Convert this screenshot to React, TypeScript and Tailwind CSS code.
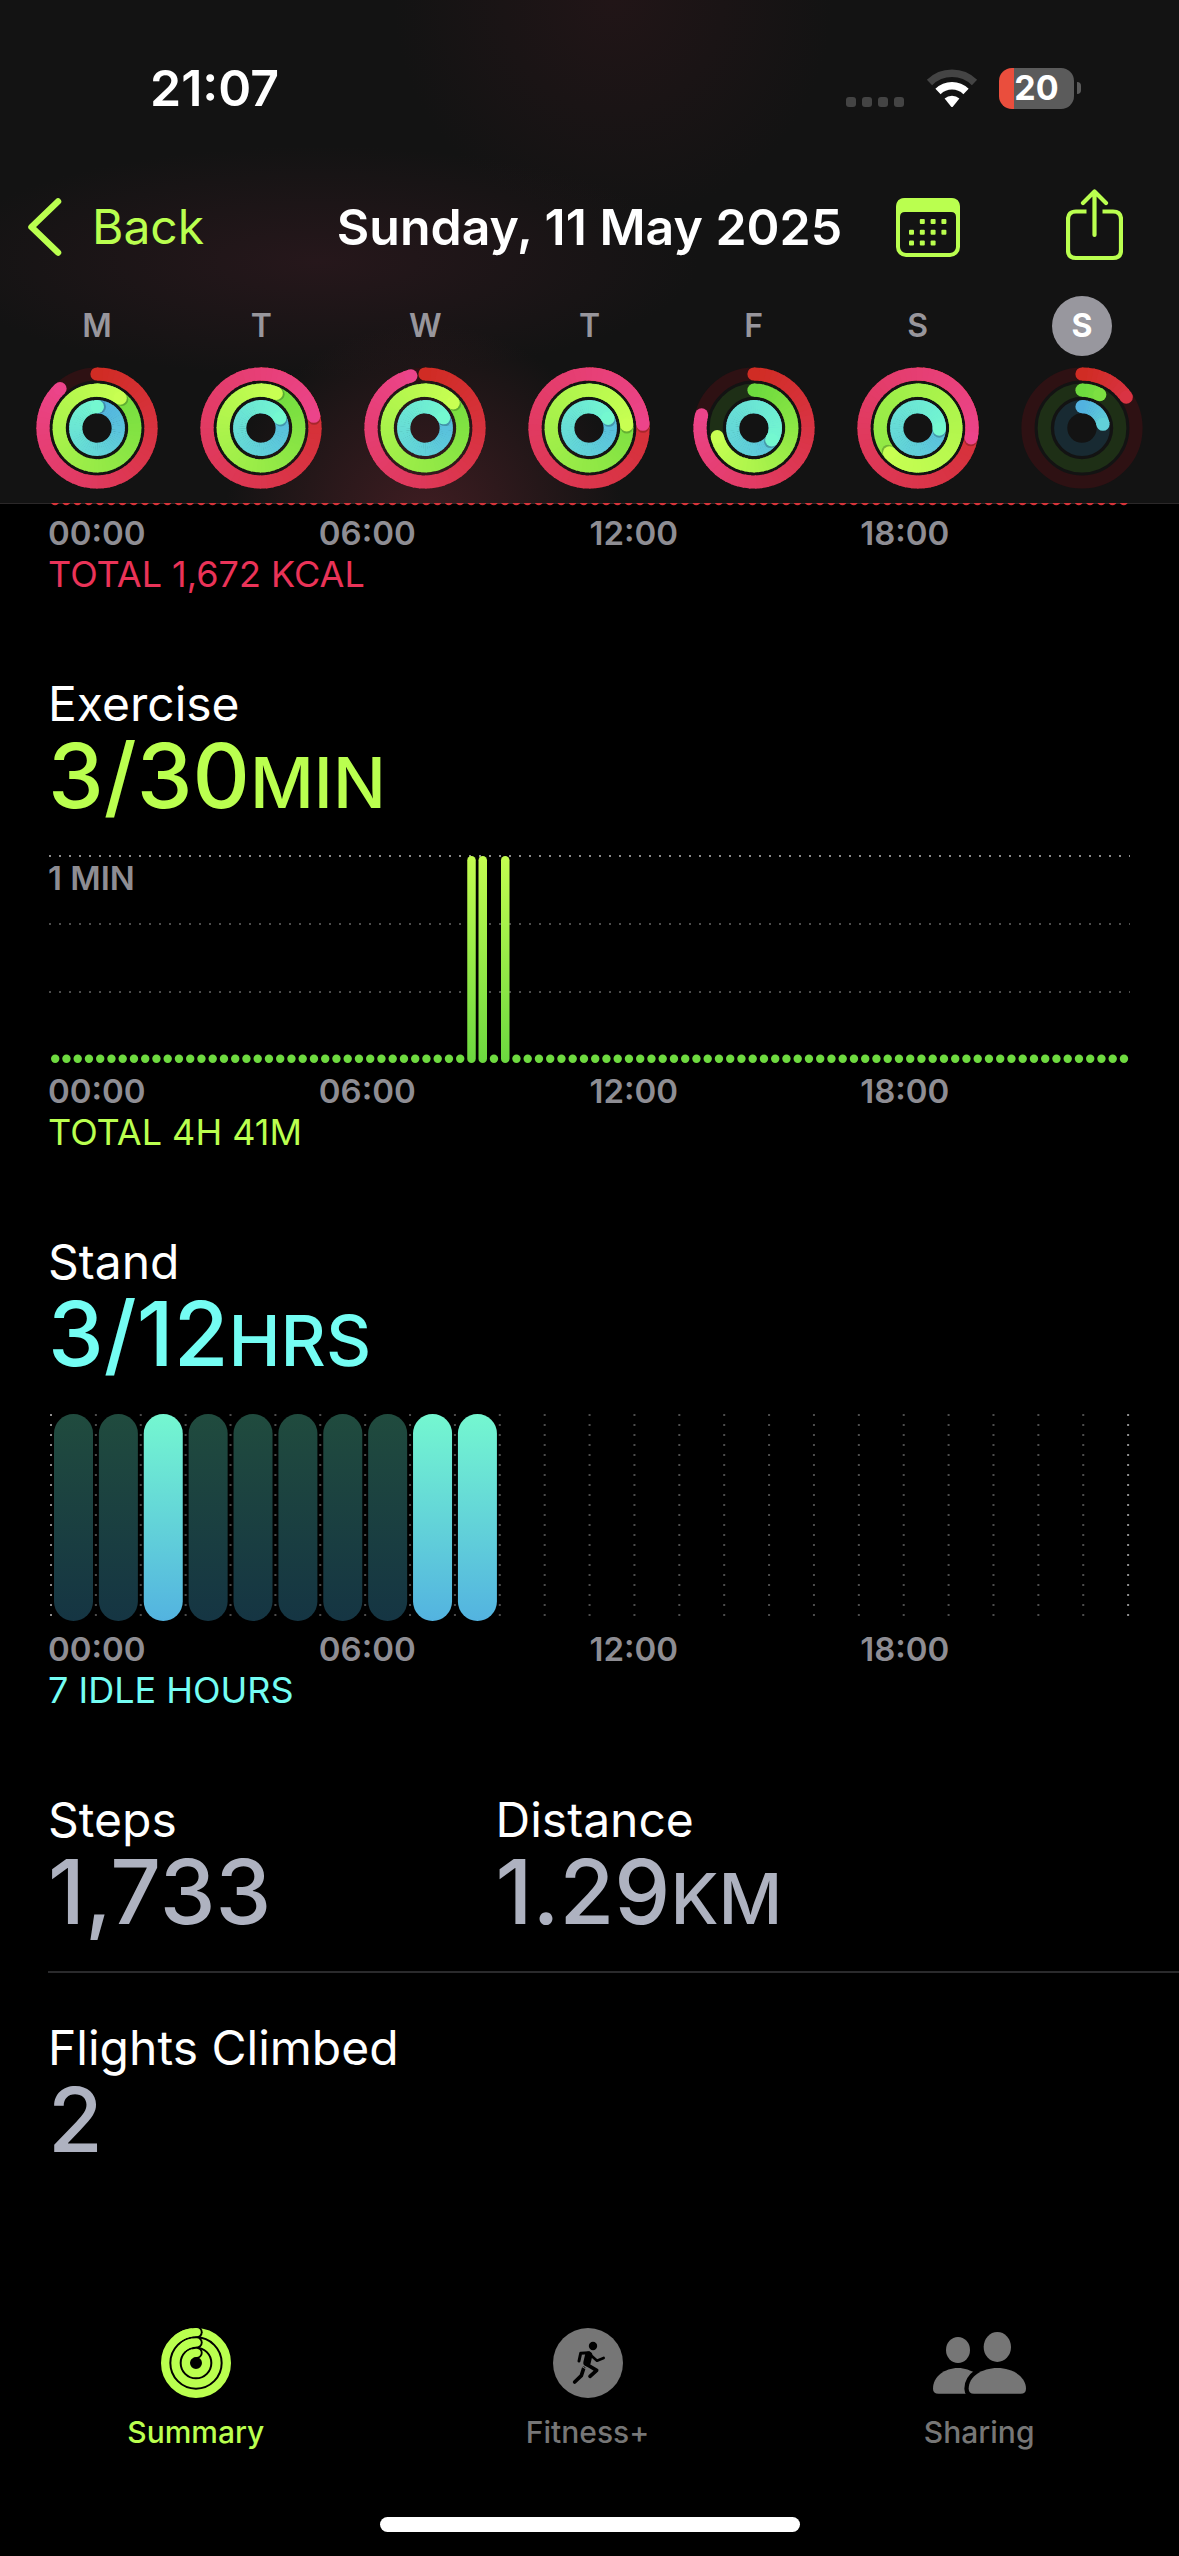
import type { ReactNode } from 'react'

type RGB = [number, number, number]

const RING_STYLES: { radius: number; from: RGB; to: RGB; track: string }[] = [
  { radius: 54, from: [208, 44, 36], to: [236, 68, 138], track: '#2e1113' },
  { radius: 37.8, from: [110, 218, 62], to: [200, 255, 82], track: '#1e2f16' },
  { radius: 21.3, from: [82, 178, 224], to: [116, 248, 208], track: '#182a32' },
]

// move, exercise and stand progress, 1 = goal reached
const WEEK = [
  { day: 'Monday', values: [0.88, 1.105, 1.003] },
  { day: 'Tuesday', values: [1.215, 1.066, 1.173] },
  { day: 'Wednesday', values: [0.958, 1.134, 1.17] },
  { day: 'Thursday', values: [1.239, 1.237, 1.176] },
  { day: 'Friday', values: [0.789, 0.713, 1.344] },
  { day: 'Saturday', values: [1.279, 1.636, 1.258] },
  { day: 'Sunday', values: [0.153, 0.078, 0.222], selected: true },
]

const HOURS = ['00:00', '06:00', '12:00', '18:00']
const EXERCISE_SLOTS = [37, 38, 40]
const STAND_HOURS = [false, false, true, false, false, false, false, false, true, true]

function range(n: number) {
  return Array.from({ length: n }, (_, i) => i)
}

function mix(a: RGB, b: RGB, t: number) {
  return `rgb(${a.map((v, i) => Math.round(v + (b[i] - v) * t)).join(',')})`
}

function point(radius: number, turn: number) {
  const angle = turn * Math.PI * 2
  return { x: 61 + radius * Math.sin(angle), y: 61 - radius * Math.cos(angle) }
}

function Ring({ radius, from, to, track, value }: (typeof RING_STYLES)[number] & { value: number }) {
  const steps = Math.ceil(value * 60)
  const endShade = Math.min(1, value * 2)
  const start = point(radius, 0)
  const end = point(radius, value)
  const shadow = point(radius, value + 0.35 / radius)

  return (
    <g fill="none" strokeWidth="13.2">
      <circle cx="61" cy="61" r={radius} stroke={track} />
      <circle cx={start.x} cy={start.y} r="6.6" fill={mix(from, to, 0)} />
      {range(steps).map((i) => {
        const a = point(radius, (value * i) / steps)
        const b = point(radius, Math.min(value, (value * (i + 1.25)) / steps))
        return (
          <path
            key={i}
            d={`M${a.x} ${a.y}A${radius} ${radius} 0 0 1 ${b.x} ${b.y}`}
            stroke={mix(from, to, (i / steps) * endShade)}
          />
        )
      })}
      {value > 1 && <circle cx={shadow.x} cy={shadow.y} r="6.4" fill="#000" opacity="0.22" />}
      <circle cx={end.x} cy={end.y} r="6.6" fill={mix(from, to, endShade)} />
    </g>
  )
}

function ActivityRings({ values }: { values: number[] }) {
  return (
    <svg viewBox="0 0 122 122" className="size-[122px]" aria-hidden="true">
      {RING_STYLES.map((style, i) => (
        <Ring key={style.radius} {...style} value={values[i]} />
      ))}
    </svg>
  )
}

function StatusBar() {
  return (
    <div className="flex h-[176px] items-center justify-between pl-[150px] pr-[98px]">
      <span className="text-[50px] font-semibold leading-[60px]">21:07</span>
      <div className="flex items-center">
        <svg viewBox="0 0 132 42" className="h-[42px] w-[132px]" aria-hidden="true">
          {range(4).map((i) => (
            <rect key={i} x={i * 16} y="30" width="10" height="10" rx="3" fill="#444" />
          ))}
          <g fill="none" strokeWidth="7.5">
            <path d="M83.500 15.500A32 32 0 0 1 128.500 15.500" stroke="#444" />
            <path d="M92 24.500A20 20 0 0 1 120 24.500" stroke="#fff" />
          </g>
          <path d="M98.600 31.500A11 11 0 0 1 113.400 31.500L107 39.400Q106 40.400 105 39.400Z" fill="#fff" />
        </svg>
        <div className="ml-[21px] flex h-[41px] w-[75px] items-center justify-center rounded-[13px] bg-[linear-gradient(90deg,#ea4e3d_15px,#5b5b5b_15px)] text-[34px] font-bold leading-none">
          20
        </div>
        <div className="ml-[3px] h-3 w-1 rounded-r-full bg-[#5b5b5b]" />
      </div>
    </div>
  )
}

function NavBar() {
  return (
    <nav className="grid h-[102px] grid-cols-[1fr_auto_1fr] items-center">
      <button className="flex items-center gap-[30px] pl-[27px] text-[48px] leading-[60px] text-[#baff4f]">
        <svg viewBox="0 0 35 60" className="h-[60px] w-[35px]" fill="none" stroke="currentColor" strokeWidth="6.500" strokeLinecap="round" strokeLinejoin="round" aria-hidden="true">
          <path d="M31 4.500L4.500 30L31 55.500" />
        </svg>
        Back
      </button>
      <h1 className="text-[50px] font-semibold leading-[60px]">Sunday, 11 May 2025</h1>
      <div className="flex items-center justify-end gap-[106px] pr-[56px] text-[#baff4f]">
        <button aria-label="Calendar">
          <svg viewBox="0 0 64 60" className="h-[60px] w-16" fill="none" aria-hidden="true">
            <rect x="2" y="3" width="60" height="55" rx="8" stroke="currentColor" strokeWidth="4" />
            <path d="M0 20V10Q0 1 9 1H55Q64 1 64 10V20L60 20Q60 15 55 15H9Q4 15 4 20Z" fill="currentColor" />
            <g fill="currentColor">
              {range(3).map((row) =>
                range(4).map((col) =>
                  (row === 0 && col === 0) || (row === 2 && col === 3) ? null : (
                    <rect key={`${row}${col}`} x={13 + col * 10.8} y={22 + row * 10.7} width="5" height="5" rx="1" />
                  )
                )
              )}
            </g>
          </svg>
        </button>
        <button aria-label="Share" className="pb-1">
          <svg viewBox="0 0 57 72" className="h-[72px] w-[57px]" fill="none" stroke="currentColor" strokeWidth="4.200" aria-hidden="true">
            <path d="M20.500 22.500H10Q2 22.500 2 30.500V61Q2 69 10 69H47Q55 69 55 61V30.500Q55 22.500 47 22.500H36.500" />
            <path d="M28.500 46V3M17 14L28.500 2.500L40 14" strokeLinecap="round" strokeLinejoin="round" />
          </svg>
        </button>
      </div>
    </nav>
  )
}

function WeekStrip() {
  return (
    <div className="grid grid-cols-7 px-[15px] pb-[14px] pt-[18px]">
      {WEEK.map(({ day, values, selected }) => (
        <button key={day} aria-label={day} className="flex flex-col items-center gap-[11px]">
          <span
            className={`flex size-[60px] items-center justify-center rounded-full text-[32px] ${
              selected ? 'bg-[#98979e] font-bold text-white' : 'font-semibold text-[#98969c]'
            }`}
          >
            {day[0]}
          </span>
          <ActivityRings values={values} />
        </button>
      ))}
    </div>
  )
}

// bottom edge of the move chart, the rest is scrolled under the header
function MoveChartEdge() {
  return (
    <svg viewBox="0 0 1179 3" className="block w-full" aria-hidden="true">
      <rect width="1179" height="1" fill="#2b2829" />
      {range(96).map((i) => (
        <circle key={i} cx={55 + i * 11.25} cy="-2" r="4.300" fill="#d8343a" />
      ))}
    </svg>
  )
}

function ChartFooter({ total, color }: { total: string; color: string }) {
  return (
    <div className="px-12 pt-[7px]">
      <div className="grid grid-cols-4 text-[33px] font-semibold leading-10 text-[#8e8d93]">
        {HOURS.map((h) => (
          <span key={h}>{h}</span>
        ))}
      </div>
      <p className={`text-[36px] leading-[42px] ${color}`}>{total}</p>
    </div>
  )
}

function Metric({ label, value, unit, color }: { label: string; value: string; unit?: string; color: string }) {
  return (
    <div>
      <h2 className="text-[48px] leading-[60px]">{label}</h2>
      <p className={`text-[89px] font-medium leading-[84px] ${color}`}>
        {value}
        {unit && <span className="text-[70px] leading-none">{unit}</span>}
      </p>
    </div>
  )
}

function ExerciseChart() {
  return (
    <div className="relative mt-9 px-[49px]">
      <svg viewBox="0 0 1081 210" className="block w-full" role="img" aria-label="Exercise minutes by time of day">
        <defs>
          <linearGradient id="exercise" gradientUnits="userSpaceOnUse" x1="0" y1="2" x2="0" y2="209">
            <stop offset="0" stopColor="#c4fd50" />
            <stop offset="1" stopColor="#6bd83f" />
          </linearGradient>
        </defs>
        {[2, 70, 138].map((y, i) => (
          <path key={y} d={`M0 ${y}H1081`} stroke={i === 0 ? '#8c8c8c' : '#4c4c4c'} strokeWidth="2" strokeDasharray="2 8" />
        ))}
        {range(96).map((i) =>
          EXERCISE_SLOTS.includes(i) ? (
            <rect key={i} x={2 + i * 11.25} y="2" width="8.500" height="207" rx="4.250" fill="url(#exercise)" />
          ) : (
            <circle key={i} cx={6.2 + i * 11.25} cy="204.800" r="4.200" fill="#6fdb40" />
          )
        )}
      </svg>
      <span className="absolute left-12 top-1 text-[33px] font-semibold leading-10 text-[#8e8d93]">1 MIN</span>
    </div>
  )
}

function StandChart() {
  return (
    <div className="mt-9 px-[49px]">
      <svg viewBox="0 0 1081 210" className="block w-full" role="img" aria-label="Stand hours by time of day">
        <defs>
          <linearGradient id="stood" x1="0" y1="0" x2="0" y2="1">
            <stop offset="0" stopColor="#74f7d0" />
            <stop offset="1" stopColor="#53b3e0" />
          </linearGradient>
          <linearGradient id="idle" x1="0" y1="0" x2="0" y2="1">
            <stop offset="0" stopColor="#204b3e" />
            <stop offset="1" stopColor="#153543" />
          </linearGradient>
        </defs>
        {range(25).map((i) => {
          const x = 2 + i * 44.88
          return (
            <path
              key={i}
              d={`M${x} 2V206`}
              stroke={i === 0 || i === 24 ? '#8c8c8c' : '#4c4c4c'}
              strokeWidth="2"
              strokeDasharray="2 8"
            />
          )
        })}
        {STAND_HOURS.map((stood, i) => (
          <rect key={i} x={5 + i * 44.88} y="2" width="39" height="207" rx="19.500" fill={stood ? 'url(#stood)' : 'url(#idle)'} />
        ))}
      </svg>
    </div>
  )
}

function SummaryIcon() {
  return (
    <svg viewBox="0 0 210 210" className="size-[70px]" fill="none" aria-hidden="true">
      {[92.5, 61.5, 30.5].map((r) => {
        const y = 105 - r
        return (
          <g key={r}>
            <circle cx="105" cy="105" r={r} stroke="#baff4f" strokeWidth="25" />
            <circle cx="107" cy={y} r="18" fill="#000" />
            <path
              d={`M${105 - r * 0.6} ${105 - r * 0.8}A${r} ${r} 0 0 1 107 ${y}`}
              stroke="#baff4f"
              strokeWidth="25"
              strokeLinecap="round"
            />
          </g>
        )
      })}
    </svg>
  )
}

function FitnessIcon() {
  return (
    <svg viewBox="0 0 210 210" className="size-[70px]" fill="none" stroke="#000" strokeLinecap="round" strokeLinejoin="round" aria-hidden="true">
      <circle cx="105" cy="105" r="105" fill="#767676" stroke="none" />
      <circle cx="120" cy="54" r="12.500" fill="#000" stroke="none" />
      <path d="M78 99L83 76L108 74" strokeWidth="9" />
      <path d="M108 76L117 85L132 98L152 90" strokeWidth="8" />
      <path d="M107 82L102 104" strokeWidth="22" />
      <path d="M99 108L131 127L111 145" strokeWidth="11" />
      <path d="M92 121L85 143L65 162" strokeWidth="11" />
      <path d="M80 112L106 127" stroke="#767676" strokeWidth="3" strokeLinecap="butt" />
    </svg>
  )
}

function SharingIcon() {
  return (
    <svg viewBox="105 54 279 210" className="h-[70px] w-[93px]" fill="#767676" aria-hidden="true">
      <ellipse cx="180" cy="120" rx="36" ry="39" />
      <ellipse cx="298" cy="111" rx="41" ry="45" />
      <path d="M105 236C105 200 140 174 180 174C220 174 255 200 255 236Q255 251 238 251H122Q105 251 105 236Z" />
      <path
        d="M212 236C212 200 252 174 298 174C344 174 384 200 384 236Q384 251 368 251H228Q212 251 212 236Z"
        stroke="#000"
        strokeWidth="26"
      />
      <path d="M212 236C212 200 252 174 298 174C344 174 384 200 384 236Q384 251 368 251H228Q212 251 212 236Z" />
    </svg>
  )
}

function Tab({ icon, label, active }: { icon: ReactNode; label: string; active?: boolean }) {
  return (
    <button
      aria-current={active ? 'page' : undefined}
      className={`flex flex-1 flex-col items-center gap-4 text-[30px] font-medium leading-9 ${active ? 'text-[#baff4f]' : 'text-[#767676]'}`}
    >
      {icon}
      {label}
    </button>
  )
}

export default function App() {
  return (
    <div className="flex min-h-screen flex-col bg-black font-['Inter',sans-serif] text-white">
      <header className="bg-[#131313] bg-[radial-gradient(circle_at_36%_104%,#401d22_0,transparent_200px),radial-gradient(ellipse_at_27%_52%,#26171b_0,transparent_380px),radial-gradient(circle_at_52%_0%,#211517_0,transparent_220px)]">
        <StatusBar />
        <NavBar />
        <WeekStrip />
      </header>

      <main className="flex-1">
        <MoveChartEdge />
        <ChartFooter total="TOTAL 1,672 KCAL" color="text-[#ea3358]" />

        <section className="mt-[79px]">
          <div className="px-12">
            <Metric label="Exercise" value="3/30" unit="MIN" color="text-[#baff4f]" />
          </div>
          <ExerciseChart />
          <ChartFooter total="TOTAL 4H 41M" color="text-[#baff4f]" />
        </section>

        <section className="mt-[79px]">
          <div className="px-12">
            <Metric label="Stand" value="3/12" unit="HRS" color="text-[#74fdf3]" />
          </div>
          <StandChart />
          <ChartFooter total="7 IDLE HOURS" color="text-[#74fdf3]" />
        </section>

        <section className="ml-12 mt-[79px]">
          <div className="grid grid-cols-[2fr_3fr] border-b-2 border-[#2a2a2c] pb-[37px] pr-3">
            <Metric label="Steps" value="1,733" color="text-[#aeb2c0]" />
            <Metric label="Distance" value="1.29" unit="KM" color="text-[#aeb2c0]" />
          </div>
          <div className="pt-[45px]">
            <Metric label="Flights Climbed" value="2" color="text-[#aeb2c0]" />
          </div>
        </section>
      </main>

      <footer className="pb-6">
        <nav className="flex pr-1">
          <Tab icon={<SummaryIcon />} label="Summary" active />
          <Tab icon={<FitnessIcon />} label="Fitness+" />
          <Tab icon={<SharingIcon />} label="Sharing" />
        </nav>
        <div className="mx-auto mt-[67px] h-[15px] w-[420px] rounded-full bg-white" />
      </footer>
    </div>
  )
}
